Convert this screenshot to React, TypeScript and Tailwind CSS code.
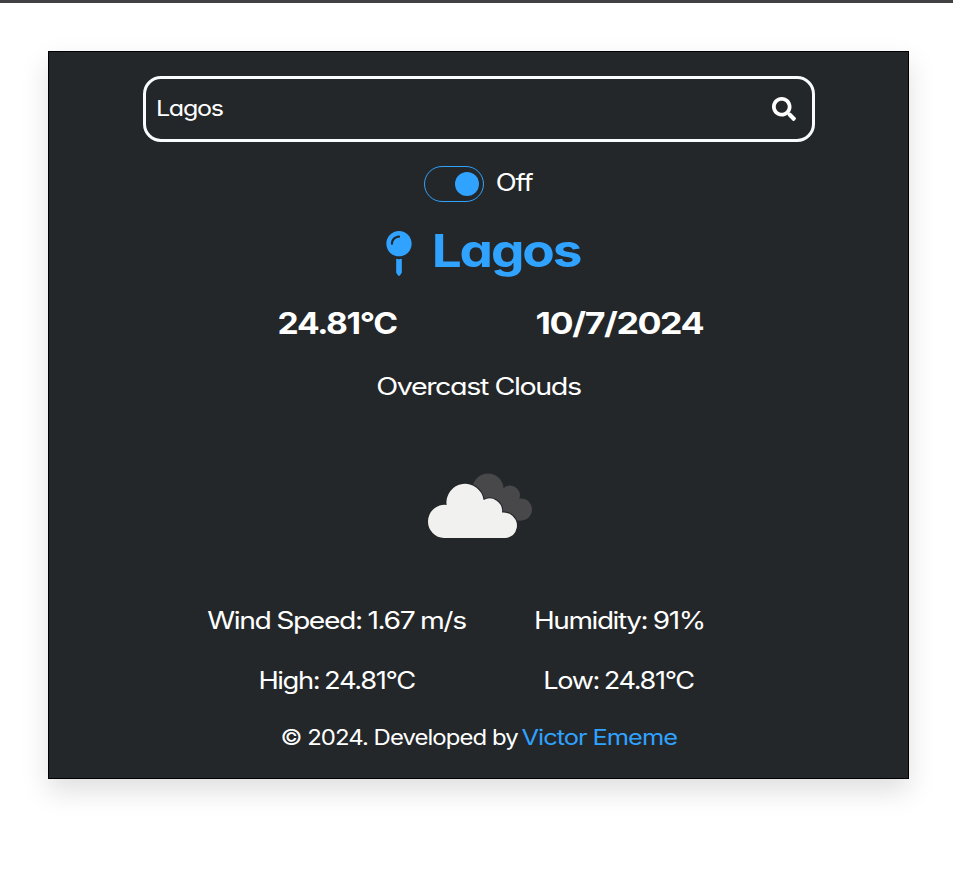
import { FaMapPin, FaSearch } from "react-icons/fa";

type LabelProps = { children: string; box: string; text: string };

function Label({ children, box, text }: LabelProps) {
  return (
    <span className={`flex shrink-0 items-center justify-center whitespace-nowrap ${box}`}>
      <span className={`block shrink-0 ${text}`}>{children}</span>
    </span>
  );
}

function Clouds() {
  return (
    <svg width="106" height="66" viewBox="0 0 106 66" aria-hidden="true">
      <g fill="#48484a">
        <circle cx="61" cy="16" r="15.5" />
        <circle cx="83" cy="22.500" r="10" />
        <circle cx="94" cy="36.500" r="11" />
        <path d="M61 16 H76 L90 26 L94 47.500 H70 Z" />
      </g>
      <g fill="#f1f1ef" stroke="#232729" strokeWidth="2" paintOrder="stroke">
        <path d="M17 65 A16.500 16.500 0 0 1 1 48.500 A16.500 16.500 0 0 1 19.600 32 A18.500 18.500 0 1 1 56.600 27 A12.500 12.500 0 0 1 75 39.500 A13.200 13.200 0 0 1 86 62 Q82 65 78 65 Z" />
      </g>
    </svg>
  );
}

export default function App() {
  return (
    <div className="h-[870px] w-full overflow-hidden border-t-[3px] border-[#414042] bg-white pt-12 font-['Inter',sans-serif] text-white [font-feature-settings:'cv11']">
      <main className="ml-12 flex h-[728px] w-[861px] flex-col items-center border border-black bg-[#232729] pt-6 shadow-[0_12px_26px_rgba(0,0,0,0.13)]">
        <form className="flex h-[66px] w-[672px] shrink-0 items-center justify-between rounded-[18px] border-[3px] border-[#fafbff] pr-4 pb-[1px] pl-[11px]">
          <Label box="w-[66px] pb-px" text="text-[22px] leading-7 tracking-[-0.05em] scale-x-[1.14]">Lagos</Label>
          <FaSearch size={24} />
        </form>

        <div className="mt-6 flex h-9 shrink-0 items-center gap-3">
          <button className="flex h-9 w-[60px] items-center justify-end rounded-full border border-[#30a2ff] pr-1" aria-label="Theme">
            <span className="size-6 rounded-full bg-[#30a2ff]" />
          </button>
          <Label box="w-[37px] pb-[3px]" text="text-[24px] leading-8 tracking-[-0.04em] scale-x-[1.14]">Off</Label>
        </div>

        <h1 className="mt-[24px] flex h-[52px] shrink-0 items-center gap-[20px] pl-[9px] text-[#30a2ff]">
          <FaMapPin size={45} className="mt-[3px] w-[26px]" />
          <Label box="w-[148px] pb-[3px]" text="text-[45px] leading-[52px] font-bold tracking-[-0.04em] scale-x-[1.18]">Lagos</Label>
        </h1>

        <div className="mt-[25px] mr-[45px] grid shrink-0 grid-cols-[260px_170px] gap-x-[67px] leading-10">
          <Label box="w-[260px]" text="text-[30px] font-bold tracking-[-0.04em] scale-x-[1.12]">24.81°C</Label>
          <Label box="w-[170px]" text="text-[30px] font-bold tracking-[-0.04em] scale-x-[1.19]">10/7/2024</Label>
        </div>

        <Label box="mt-[24px] h-10 w-[204px]" text="text-[24px] tracking-[-0.05em] scale-x-[1.195]">Overcast Clouds</Label>

        <div className="mt-[66px] flex h-[66px] shrink-0 justify-center pl-[3px]">
          <Clouds />
        </div>

        <div className="mt-[62px] mr-[45px] grid shrink-0 grid-cols-[260px_170px] gap-x-[67px] gap-y-5 text-[24px] leading-10 tracking-[-0.05em]">
          <Label box="w-[260px] pr-[2px]" text="scale-x-[1.18] [word-spacing:-0.03em]">Wind Speed: 1.67 m/s</Label>
          <Label box="w-[170px]" text="scale-x-[1.165] [word-spacing:-0.03em]">Humidity: 91%</Label>
          <Label box="w-[260px] pr-px" text="scale-x-[1.14] [word-spacing:-0.06em]">High: 24.81°C</Label>
          <Label box="w-[170px] pr-px" text="scale-x-[1.13] [word-spacing:-0.06em]">Low: 24.81°C</Label>
        </div>

        <footer className="mt-[17px] flex shrink-0 gap-[5px] text-[21px] leading-10 tracking-[-0.04em]">
          <Label box="w-[236px]" text="scale-x-[1.14]">© 2024. Developed by</Label>
          <a className="text-[#30a2ff]">
            <Label box="w-[154px]" text="scale-x-[1.21]">Victor Ememe</Label>
          </a>
        </footer>
      </main>
    </div>
  );
}
